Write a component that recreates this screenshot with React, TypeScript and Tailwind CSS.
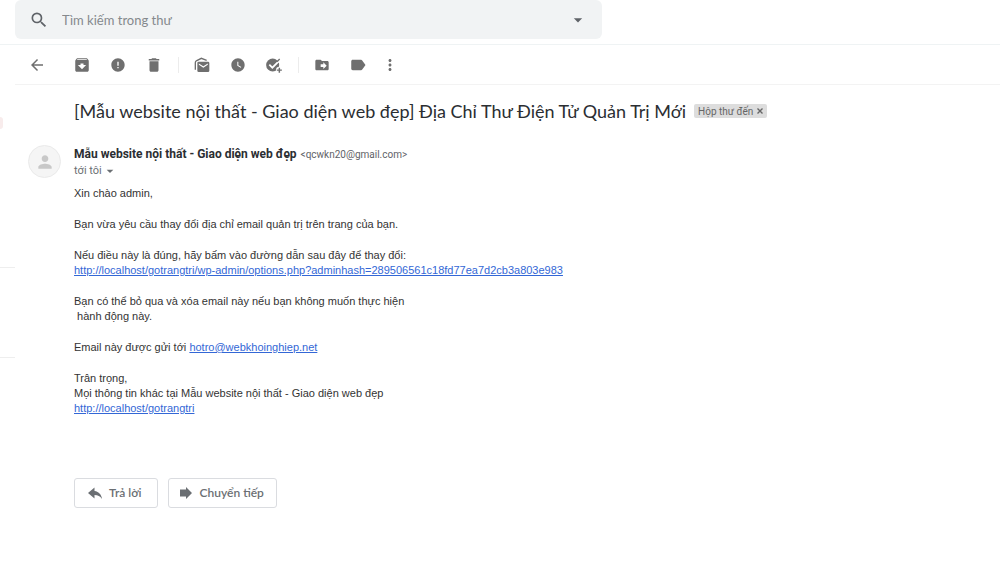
import React, { useState } from 'react';
import {
  MdArchive,
  MdArrowBack,
  MdArrowDropDown,
  MdDelete,
  MdDriveFileMove,
  MdError,
  MdLabel,
  MdMoreVert,
  MdPerson,
  MdSearch,
  MdWatchLater,
} from 'react-icons/md';

const SITE_NAME = 'Mẫu website nội thất - Giao diện web đẹp';
const CONFIRM_URL = 'http://localhost/gotrangtri/wp-admin/options.php?adminhash=289506561c18fd77ea7d2cb3a803e983';
const SITE_URL = 'http://localhost/gotrangtri';

function MarkUnreadIcon({ className }: { className?: string }) {
  return (
    <svg viewBox="0 0 24 24" className={className}>
      <path d="M2 19V8.500C2 7 2.500 6.300 3.500 5.700L11 2l8 3" fill="none" stroke="currentColor" strokeWidth="2" />
      <path
        fill="currentColor"
        d="M21 7H7a2 2 0 0 0-2 2v11.500a2 2 0 0 0 2 2h14a2 2 0 0 0 2-2V9a2 2 0 0 0-2-2zm-.3 4.800L14 16l-6.700-4.200V9.700L14 13.900l6.700-4.200z"
      />
    </svg>
  );
}

function AddTaskIcon({ className }: { className?: string }) {
  return (
    <svg viewBox="0 0 24 24" className={className}>
      <circle cx="10" cy="12" r="9.800" fill="currentColor" />
      <path d="M5 11.500l4.500 4.500L22 3.500" fill="none" stroke="#fff" strokeWidth="2.600" />
      <path d="M16.500 7L20.500 3" fill="none" stroke="currentColor" strokeWidth="2" />
      <circle cx="20" cy="19.500" r="5" fill="#fff" />
      <path d="M20 16v7.500M16.200 19.700h7.600" fill="none" stroke="currentColor" strokeWidth="2.200" />
    </svg>
  );
}

function ReplyIcon({ className }: { className?: string }) {
  return (
    <svg viewBox="0 0 16 16" fill="currentColor" className={className}>
      <path d="M7.500 6V2.500L1 8l6.500 5.500V10c3.500 0 5.500 1 7.500 4-.5-4-3-7.500-7.500-8z" />
    </svg>
  );
}

function ForwardIcon({ className }: { className?: string }) {
  return (
    <svg viewBox="0 0 16 16" fill="currentColor" className={className}>
      <path d="M2 4.500h6V2l6 6-6 6v-2.500H2z" />
    </svg>
  );
}

interface ToolButtonProps {
  label: string;
  icon: React.ComponentType<{ className?: string }>;
  large?: boolean;
  narrow?: boolean;
}

function ToolButton({ label, icon: Icon, large, narrow }: ToolButtonProps) {
  return (
    <button
      type="button"
      aria-label={label}
      title={label}
      className={`${narrow ? 'w-7' : 'w-9'} h-8 flex items-center justify-center rounded-full hover:bg-gray-100`}
    >
      <Icon className={large ? 'w-[18px] h-[18px]' : 'w-4 h-4'} />
    </button>
  );
}

function ToolDivider() {
  return (
    <div className="w-3 flex justify-center">
      <div className="w-px h-4 bg-[#ececec]" />
    </div>
  );
}

function SearchBar() {
  const [query, setQuery] = useState('');

  return (
    <form
      role="search"
      onSubmit={(e) => e.preventDefault()}
      className="w-full max-w-[587px] h-[39px] flex items-center rounded-md bg-[#f1f3f4] text-[#5f6368]"
    >
      <button type="submit" aria-label="Tìm kiếm" className="w-[47px] h-full flex items-center justify-center">
        <MdSearch className="w-5 h-5" />
      </button>
      <input
        type="text"
        aria-label="Tìm kiếm trong thư"
        placeholder="Tìm kiếm trong thư"
        value={query}
        onChange={(e) => setQuery(e.target.value)}
        className="flex-1 min-w-0 h-full bg-transparent font-[Lato,sans-serif] text-[13px] placeholder:text-[#85898d] focus:outline-none"
      />
      <button type="button" aria-label="Tùy chọn tìm kiếm" className="w-12 h-full flex items-center justify-center">
        <MdArrowDropDown className="w-5 h-5" />
      </button>
    </form>
  );
}

function Toolbar() {
  return (
    <div className="h-10 pl-1 flex items-center border-b border-[#f3f3f3] text-[#6f6f6f]">
      <ToolButton label="Quay lại" icon={MdArrowBack} large />
      <div className="ml-[9px] flex items-center">
        <ToolButton label="Lưu trữ" icon={MdArchive} large />
        <ToolButton label="Báo cáo spam" icon={MdError} />
        <ToolButton label="Xóa" icon={MdDelete} large />
        <ToolDivider />
        <ToolButton label="Đánh dấu là chưa đọc" icon={MarkUnreadIcon} />
        <ToolButton label="Tạm ẩn" icon={MdWatchLater} />
        <ToolButton label="Thêm vào việc cần làm" icon={AddTaskIcon} />
        <ToolDivider />
        <ToolButton label="Di chuyển tới" icon={MdDriveFileMove} />
        <ToolButton label="Nhãn" icon={MdLabel} large />
        <ToolButton label="Thêm" icon={MdMoreVert} large narrow />
      </div>
    </div>
  );
}

function MessageBody() {
  return (
    <div className="mt-[7px] space-y-4 font-['Liberation_Sans',Arial,sans-serif] text-[11px] leading-[15px] text-[#333]">
      <p>Xin chào admin,</p>
      <p>Bạn vừa yêu cầu thay đổi địa chỉ email quản trị trên trang của bạn.</p>
      <p>
        Nếu điều này là đúng, hãy bấm vào đường dẫn sau đây để thay đổi:
        <br />
        <a href={CONFIRM_URL} className="text-[#3367d6] underline break-all">{CONFIRM_URL}</a>
      </p>
      <p>
        Bạn có thể bỏ qua và xóa email này nếu bạn không muốn thực hiện
        <br />
        &nbsp;hành động này.
      </p>
      <p>
        Email này được gửi tới{' '}
        <a href="mailto:hotro@webkhoinghiep.net" className="text-[#3367d6] underline">hotro@webkhoinghiep.net</a>
      </p>
      <p>
        Trân trọng,
        <br />
        Mọi thông tin khác tại {SITE_NAME}
        <br />
        <a href={SITE_URL} className="text-[#3367d6] underline">{SITE_URL}</a>
      </p>
    </div>
  );
}

export default function App() {
  return (
    <div className="min-h-screen bg-white font-[Roboto,sans-serif]">
      <header className="h-[45px] px-[15px] border-b border-[#eff3f4]">
        <SearchBar />
      </header>

      <div className="flex">
        {/* Edge of the collapsed sidebar */}
        <aside className="w-[15px] shrink-0 pt-[72px]">
          <div className="w-[3px] h-3 rounded-r-full bg-[#f8ecec]" />
          <div className="mt-[138px] h-[91px] border-y border-[#eee]" />
        </aside>

        <main className="flex-1 min-w-0">
          <Toolbar />

          <div className="pl-[59px] pr-4 pt-[14px] flex flex-wrap items-center gap-x-2">
            <h1 className="font-[Lato,sans-serif] text-[18px] leading-6 text-[#2b2e32]">
              [{SITE_NAME}] Địa Chỉ Thư Điện Tử Quản Trị Mới
            </h1>
            <span className="h-[14px] px-1 flex items-center gap-1 rounded-xs bg-[#ddd] text-[10px] text-[#666]">
              Hộp thư đến
              <button type="button" aria-label="Xóa nhãn Hộp thư đến">
                <svg viewBox="0 0 6 6" fill="none" stroke="currentColor" strokeWidth="1.400" className="w-[6px] h-[6px]">
                  <path d="M.5.5l5 5M5.500.5l-5 5" />
                </svg>
              </button>
            </span>
          </div>

          <article className="pt-[22px] pl-[13px] pr-4 flex items-start gap-[13px]">
            <div className="w-[33px] h-[33px] shrink-0 flex items-center justify-center rounded-full border border-[#eaeaea] bg-[#f5f5f5]">
              <MdPerson className="w-5 h-5 text-[#c8c8c8]" />
            </div>

            <div className="flex-1 min-w-0">
              <div className="leading-4">
                <span className="text-[12px] font-bold text-[#2b2e32]">{SITE_NAME}</span>{' '}
                <span className="text-[10px] text-[#5f6368]">&lt;qcwkn20@gmail.com&gt;</span>
              </div>
              <button type="button" className="flex items-center text-[11px] leading-4 text-[#6b6f73]">
                tới tôi
                <MdArrowDropDown className="w-4 h-4" />
              </button>

              <MessageBody />

              <div className="mt-[62px] flex flex-wrap gap-[10px] font-[Lato,sans-serif] text-[12px] font-semibold text-[#6b6f73]">
                <button type="button" className="h-[30px] pl-3 pr-[15px] flex items-center gap-[6px] rounded-[3px] border border-[#dadce0]">
                  <ReplyIcon className="w-4 h-4" />
                  Trả lời
                </button>
                <button type="button" className="h-[30px] pl-[9px] pr-3 flex items-center gap-[6px] rounded-[3px] border border-[#dadce0]">
                  <ForwardIcon className="w-4 h-4" />
                  Chuyển tiếp
                </button>
              </div>
            </div>
          </article>
        </main>
      </div>
    </div>
  );
}
